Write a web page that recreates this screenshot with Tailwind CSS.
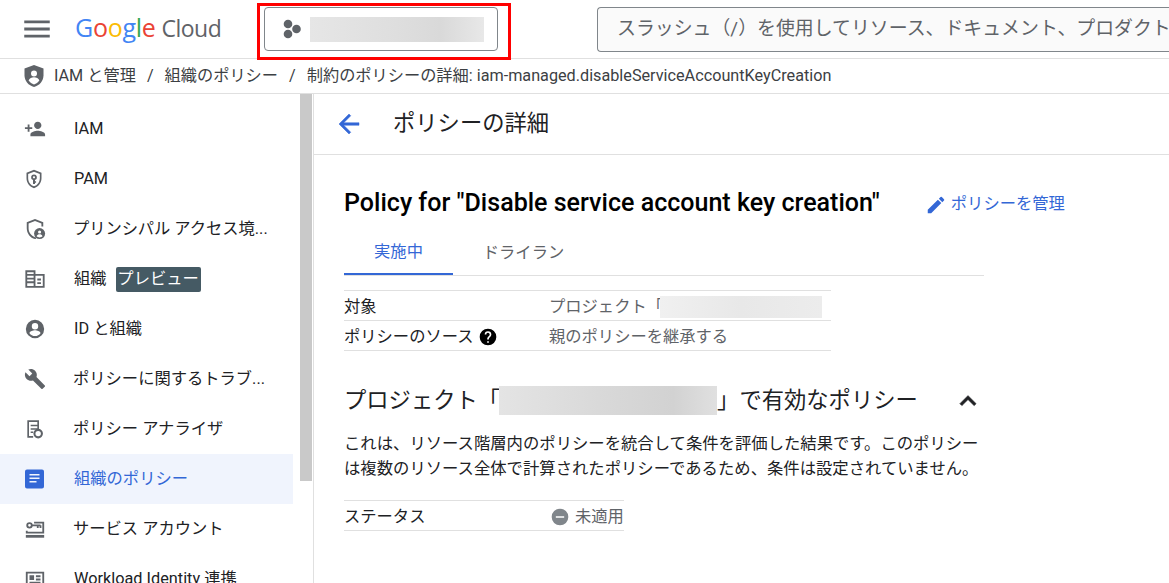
<!DOCTYPE html>
<html lang="ja">
<head>
<meta charset="utf-8">
<title>ポリシーの詳細</title>
<script src="https://cdn.jsdelivr.net/npm/@tailwindcss/browser@4"></script>
</head>
<body class="h-[583px] w-[1169px] overflow-hidden bg-white text-[16.3px] text-[#202124] font-['Roboto','Noto_Sans_CJK_JP',sans-serif]">
<div class="relative flex h-[583px] flex-col">

  <!-- top bar -->
  <header class="flex h-[59px] shrink-0 items-center border-b border-[#e0e0e0]">
    <svg class="ml-[20px] h-[34px] w-[34px] shrink-0" viewBox="0 0 24 24" fill="#5f6368"><path d="M3 18h18v-2H3v2zm0-5h18v-2H3v2zm0-7v2h18V6H3z"/></svg>
    <div class="ml-[21px] mt-[-3px] flex w-[166px] shrink-0 items-baseline leading-none whitespace-nowrap font-['Open_Sans',sans-serif]">
      <span class="text-[25px] tracking-[-0.3px]"><span class="text-[#4285f4]">G</span><span class="text-[#ea4335]">o</span><span class="text-[#fbbc04]">o</span><span class="text-[#4285f4]">g</span><span class="text-[#34a853]">l</span><span class="text-[#ea4335]">e</span></span>
      <span class="ml-[6px] text-[23px] tracking-[-0.5px] text-[#5f6368]">Cloud</span>
    </div>
    <div class="ml-[23px] flex h-[44px] w-[234px] shrink-0 items-center rounded-[4px] border border-[#80868b] pl-[15px]">
      <svg class="h-[22px] w-[22px] shrink-0" viewBox="0 0 22 22" fill="#5f6368"><circle cx="8" cy="6" r="4.300"/><circle cx="8" cy="16" r="4.300"/><circle cx="16.500" cy="11" r="4.300"/></svg>
      <div class="ml-[8px] h-[25px] w-[174px] bg-[linear-gradient(90deg,#e6e6e6,#dedede_50%,#d9d9d9_75%,#e8e8e8)]"></div>
    </div>
    <div class="ml-[99px] flex h-[45px] min-w-0 flex-1 items-center overflow-hidden rounded-l-[4px] border-y border-l border-[#80868b] bg-[#fafafa] pl-[19px] text-[18.900px] whitespace-nowrap text-[#5f6368]">スラッシュ（/）を使用してリソース、ドキュメント、プロダクトなどを検索</div>
  </header>

  <!-- breadcrumb -->
  <nav class="flex h-[35px] shrink-0 items-center border-b border-[#e0e0e0] pl-[22px] text-[16.220px] whitespace-nowrap text-[#3c4043]">
    <svg class="h-[24px] w-[24px] shrink-0" viewBox="0 0 24 24"><path fill="#5f6368" d="M12 1 2.500 4.500v6.800c0 5.600 4 10.400 9.500 11.700 5.500-1.300 9.500-6.100 9.500-11.700V4.500L12 1z"/><circle cx="12" cy="9.600" r="3" fill="#fff"/><path fill="#fff" d="M6.600 16.600c1-2.200 3-3.300 5.400-3.300s4.400 1.100 5.400 3.300C16 18.500 14.200 19.800 12 20.500c-2.200-.7-4-2-5.400-3.900z"/></svg>
    <span class="ml-[8px]">IAM と管理</span>
    <span class="mx-[11px]">/</span>
    <span>組織のポリシー</span>
    <span class="mx-[11px]">/</span>
    <span>制約のポリシーの詳細: iam-managed.disableServiceAccountKeyCreation</span>
  </nav>

  <div class="flex min-h-0 flex-1">
    <!-- side menu -->
    <aside class="flex h-full w-[314px] shrink-0 overflow-hidden border-r border-[#e0e0e0]">
      <ul class="w-[293px] shrink-0 pt-[10px]">
        <li class="flex h-[50px] items-center whitespace-nowrap">
          <svg class="ml-[24px] h-[22px] w-[22px] shrink-0" viewBox="0 0 24 24" fill="#5f6368"><path d="M15 12c2.200 0 4-1.800 4-4s-1.800-4-4-4-4 1.800-4 4 1.800 4 4 4zm-9-2V7H4v3H1v2h3v3h2v-3h3v-2H6zm9 4c-2.700 0-8 1.300-8 4v2h16v-2c0-2.700-5.300-4-8-4z"/></svg>
          <span class="ml-[28px]">IAM</span>
        </li>
        <li class="flex h-[50px] items-center whitespace-nowrap">
          <svg class="ml-[24px] h-[20px] w-[20px] shrink-0" viewBox="0 0 24 24" fill="#5f6368"><path fill-rule="evenodd" d="M12 1 3 4.500v6.600c0 5.500 3.800 10.600 9 11.900 5.200-1.300 9-6.400 9-11.900V4.500L12 1zm0 2.200 7 2.700v5.200c0 4.400-2.900 8.400-7 9.700-4.100-1.300-7-5.300-7-9.700V5.900l7-2.700zM12 6.500a3.500 3.500 0 0 0-1.200 6.800V18h2.400v-1.500h1.300v-1.800h-1.300v-1.400A3.500 3.500 0 0 0 12 6.500zm0 2.200a1.300 1.300 0 1 1 0 2.600 1.300 1.300 0 0 1 0-2.600z"/></svg>
          <span class="ml-[30px]">PAM</span>
        </li>
        <li class="flex h-[50px] items-center whitespace-nowrap">
          <svg class="ml-[24px] h-[22px] w-[22px] shrink-0" viewBox="0 0 24 24" fill="#5f6368"><path d="M12 1 3 4.500v6.600c0 5.500 3.800 10.600 9 11.900l1.500-.5-1-1.700-.5.100c-4.100-1.300-7-5.300-7-9.700V5.900l7-2.700 7 2.700v3.300h2V4.500L12 1z"/><circle cx="17" cy="17" r="6"/><circle cx="17" cy="15.200" r="1.700" fill="#fff"/><path fill="#fff" d="M13.800 20c.6-1.500 1.800-2.200 3.200-2.200s2.600.7 3.200 2.200c-.8.800-2 1.300-3.200 1.300s-2.400-.5-3.200-1.300z"/></svg>
          <span class="ml-[27px]">プリンシパル アクセス境...</span>
        </li>
        <li class="flex h-[50px] items-center whitespace-nowrap">
          <svg class="ml-[24px] h-[22px] w-[22px] shrink-0" viewBox="0 0 24 24" fill="#5f6368"><path d="M1.500 2.500h11v4h10v15h-21v-19zm2 2v2h7v-2h-7zm0 4v2h7v-2h-7zm0 4v2h7v-2h-7zm0 4v3h7v-3h-7zm9-8v11h8v-11h-8zm2 3h4v2h-4v-2zm0 4h4v2h-4v-2z"/></svg>
          <span class="ml-[28px]">組織</span>
          <span class="ml-[9px] flex h-[25px] w-[85px] items-center justify-center rounded-[2px] bg-[#455a64] text-white">プレビュー</span>
        </li>
        <li class="flex h-[50px] items-center whitespace-nowrap">
          <svg class="ml-[24px] h-[22px] w-[22px] shrink-0" viewBox="0 0 24 24" fill="#5f6368"><path d="M12 2a10 10 0 1 0 0 20 10 10 0 0 0 0-20zm0 3.500a3.500 3.500 0 1 1 0 7 3.500 3.500 0 0 1 0-7zm0 14.200c-2.500 0-4.700-1.300-6-3.200.1-2 4-3.100 6-3.100s5.900 1.100 6 3.100c-1.300 1.900-3.500 3.200-6 3.200z"/></svg>
          <span class="ml-[28px]">ID と組織</span>
        </li>
        <li class="flex h-[50px] items-center whitespace-nowrap">
          <svg class="ml-[24px] h-[22px] w-[22px] shrink-0" viewBox="0 0 24 24" fill="#5f6368"><path d="M22.700 19 13.600 9.900c.9-2.300.4-5-1.500-6.900-2-2-5-2.400-7.400-1.300L9 6 6 9 1.600 4.700C.4 7.100.9 10.100 2.900 12.100c1.900 1.900 4.600 2.400 6.900 1.500l9.100 9.100c.4.400 1 .4 1.400 0l2.300-2.300c.5-.4.500-1.100.1-1.400z"/></svg>
          <span class="ml-[27px]">ポリシーに関するトラブ...</span>
        </li>
        <li class="flex h-[50px] items-center whitespace-nowrap">
          <svg class="ml-[24px] h-[20px] w-[20px] shrink-0" viewBox="0 0 24 24" fill="#5f6368"><path d="M4 1.500h14v11h-2v-9H6v17h5v2H4v-21zM8 7h8v1.800H8V7zm0 4h8v1.800H8V11zm0 4h3v1.800H8V15z"/><circle cx="17" cy="17.500" r="4.500" fill="none" stroke="#5f6368" stroke-width="2.500"/></svg>
          <span class="ml-[29px]">ポリシー アナライザ</span>
        </li>
        <li class="flex h-[50px] items-center whitespace-nowrap bg-[#f0f4fd] text-[#3367d6]">
          <svg class="ml-[24px] h-[22px] w-[22px] shrink-0" viewBox="0 0 22 22" fill="#3367d6"><path fill-rule="evenodd" d="M3 1.500h15a2 2 0 0 1 2 2v15a2 2 0 0 1-2 2H3a2 2 0 0 1-2-2v-15a2 2 0 0 1 2-2zm2.500 4.500v1.600h10V6h-10zm0 3.500v1.600h10V9.500h-10zm0 3.500v1.600h7V13h-7z"/></svg>
          <span class="ml-[28px]">組織のポリシー</span>
        </li>
        <li class="flex h-[50px] items-center whitespace-nowrap">
          <svg class="ml-[24px] h-[22px] w-[22px] shrink-0" viewBox="0 0 24 24" fill="none" stroke="#5f6368" stroke-width="2"><path d="M11 5h10v11H3v-2"/><circle cx="6" cy="8" r="2.500"/><path d="M8.500 8H18M15 8v3M18 8v3"/><path d="M2 20h20" stroke-width="3"/></svg>
          <span class="ml-[27px]">サービス アカウント</span>
        </li>
        <li class="flex h-[50px] items-center whitespace-nowrap">
          <svg class="ml-[24px] h-[22px] w-[22px] shrink-0" viewBox="0 0 24 24" fill="#5f6368"><path fill-rule="evenodd" d="M2 4h20v16H2V4zm2 2v12h16V6H4zm2 2h5v5H6V8zm7 0h5v2h-5V8zm0 3.500h5v2h-5v-2zM6 15h12v1.500H6V15z"/></svg>
          <span class="ml-[28px]">Workload Identity 連携</span>
        </li>
      </ul>
      <div class="ml-[7px] h-[387px] w-[12px] shrink-0 bg-[#c9c9c9]"></div>
    </aside>

    <!-- main content -->
    <main class="min-w-0 flex-1">
      <div class="flex h-[61px] items-center border-b border-[#e0e0e0] pl-[20px]">
        <svg class="h-[30px] w-[30px] shrink-0" viewBox="0 0 24 24" fill="#3367d6" stroke="#3367d6" stroke-width="0.4"><path d="M20 11H7.800l5.600-5.600L12 4l-8 8 8 8 1.400-1.400L7.800 13H20v-2z"/></svg>
        <h1 class="ml-[29px] text-[22.300px] text-[#202124]">ポリシーの詳細</h1>
      </div>

      <div class="w-[670px] pl-[30px]">
        <div class="flex items-center pt-[32px] whitespace-nowrap">
          <h2 class="text-[25.050px] leading-[32px] font-medium text-[#000]">Policy for "Disable service account key creation"</h2>
          <a class="ml-[45px] mt-[3px] flex items-center text-[#3367d6]">
            <svg class="h-[22px] w-[22px] shrink-0" viewBox="0 0 24 24" fill="#3367d6"><path d="M3 17.250V21h3.750L17.810 9.940l-3.750-3.750L3 17.250zM20.710 7.040a1 1 0 0 0 0-1.410l-2.340-2.340a1 1 0 0 0-1.410 0l-1.830 1.830 3.750 3.750 1.830-1.830z"/></svg>
            <span class="ml-[4px]">ポリシーを管理</span>
          </a>
        </div>

        <div class="mt-[9px] flex h-[48px] w-[640px] border-b border-[#e0e0e0]">
          <div class="flex w-[109px] items-center justify-center border-b-[2px] border-[#3367d6] pt-[4px] text-[#3367d6]">実施中</div>
          <div class="flex w-[141px] items-center justify-center pt-[4px] text-[#5f6368]">ドライラン</div>
        </div>

        <dl class="mt-[14px] w-[487px] border-t border-[#e0e0e0]">
          <div class="flex h-[30px] items-center border-b border-[#e0e0e0] pt-[3px]">
            <dt class="w-[205px]">対象</dt>
            <dd class="flex items-center text-[#5f6368]">プロジェクト「<span class="ml-[-3px] h-[22px] w-[162px] bg-[linear-gradient(90deg,#f0f0f0,#e8e8e8_50%,#ececec)]"></span></dd>
          </div>
          <div class="flex h-[30px] items-center border-b border-[#e0e0e0] pt-[3px]">
            <dt class="flex w-[205px] items-center">ポリシーのソース
              <svg class="ml-[5px] h-[20px] w-[20px]" viewBox="0 0 24 24" fill="#000"><path d="M12 2a10 10 0 1 0 0 20 10 10 0 0 0 0-20zm1 17h-2v-2h2v2zm2.070-7.750-.9.920C13.450 12.900 13 13.500 13 15h-2v-.5c0-1.100.450-2.100 1.170-2.830l1.240-1.260A2 2 0 1 0 10 9H8a4 4 0 1 1 8 0c0 .880-.360 1.680-.930 2.250z"/></svg>
            </dt>
            <dd class="text-[#5f6368]">親のポリシーを継承する</dd>
          </div>
        </dl>

        <div class="mt-[30px] flex h-[36px] w-[640px] items-center justify-between whitespace-nowrap">
          <h3 class="flex items-center pt-[3px] text-[22.300px] text-[#202124]">プロジェクト「<span class="ml-[-1px] h-[29px] w-[218px] bg-[linear-gradient(90deg,#e4e4e4,#d8d8d8_50%,#d2d2d2_80%,#e0e0e0)]"></span>」で有効なポリシー</h3>
          <svg class="mt-[4px] h-[32px] w-[32px] shrink-0" viewBox="0 0 24 24" fill="#202124" stroke="#202124" stroke-width="0.6"><path d="M7.410 15.410 12 10.830l4.590 4.580L18 14l-6-6-6 6z"/></svg>
        </div>

        <p class="mt-[14px] w-[640px] text-[16.350px] leading-[25px] text-[#202124]">これは、リソース階層内のポリシーを統合して条件を評価した結果です。このポリシーは複数のリソース全体で計算されたポリシーであるため、条件は設定されていません。</p>

        <dl class="mt-[19px] w-[280px] border-t border-[#e0e0e0]">
          <div class="flex h-[30px] items-center border-b border-[#e0e0e0] pt-[3px]">
            <dt class="w-[206px]">ステータス</dt>
            <dd class="flex items-center text-[#5f6368]">
              <svg class="h-[20px] w-[20px] shrink-0" viewBox="0 0 24 24" fill="#80868b"><path d="M12 2a10 10 0 1 0 0 20 10 10 0 0 0 0-20zm5 11H7v-2h10v2z"/></svg>
              <span class="ml-[5px]">未適用</span>
            </dd>
          </div>
        </dl>
      </div>
    </main>
  </div>

  <!-- red annotation over the project picker -->
  <div class="pointer-events-none absolute top-[3px] left-[257px] h-[57px] w-[254px] border-[3px] border-[#f00]"></div>
</div>
</body>
</html>
